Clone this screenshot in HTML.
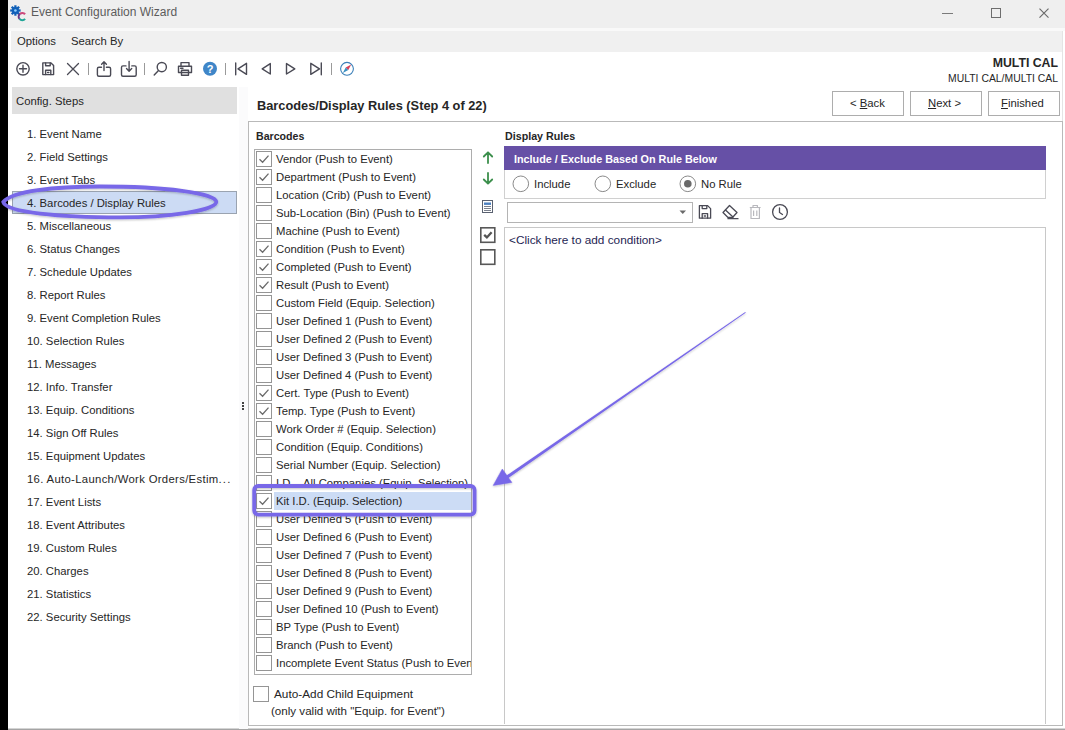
<!DOCTYPE html>
<html><head><meta charset="utf-8">
<style>
*{margin:0;padding:0;box-sizing:border-box}
html,body{width:1065px;height:730px;overflow:hidden;background:#fff;font-family:"Liberation Sans",sans-serif;color:#1f1f1f}
.a{position:absolute}
.t{position:absolute;white-space:nowrap;font-size:11.3px;line-height:14px;color:#262626}
#left{left:0;top:0;width:8px;height:730px;background:#000}
#title{left:8px;top:0;width:1057px;height:28px;background:#efefef}
#tline{left:8px;top:28px;width:1057px;height:3px;background:#f9f9f9}
#menu{left:11px;top:31px;width:1051px;height:21px;background:#f0f0f0}
.steps .t{left:27px}
.cb{position:absolute;width:16px;height:16px;border:1px solid #959595;background:#fff}
.row{position:absolute;left:0;height:18px;width:216px}
.row .cb{left:1px;top:1px}
.row .t{left:21px;top:2px}
.ck{position:absolute;left:0;top:0}
.sel .t{left:19px;padding-left:2px;width:200px;background:#ccdcf5;height:18px;top:0;padding-top:2px}
</style></head><body>
<div id="left" class="a"></div>
<div id="title" class="a"></div>
<div id="tline" class="a"></div>
<div id="menu" class="a"></div>


<!-- app icon -->
<svg class="a" style="left:8px;top:2px" width="24" height="24" viewBox="0 0 24 24">
  <g transform="translate(7.4,8.5) scale(0.87)" fill="#1160b8">
    <circle r="4"/>
    <g id="teeth"><rect x="-1.3" y="-6" width="2.6" height="3"/><rect x="-1.3" y="3" width="2.6" height="3"/><rect x="-6" y="-1.3" width="3" height="2.6"/><rect x="3" y="-1.3" width="3" height="2.6"/></g>
    <g transform="rotate(45)"><rect x="-1.3" y="-6" width="2.6" height="3"/><rect x="-1.3" y="3" width="2.6" height="3"/><rect x="-6" y="-1.3" width="3" height="2.6"/><rect x="3" y="-1.3" width="3" height="2.6"/></g>
    <circle r="1.5" fill="#8fd0ff"/>
  </g>
  <path d="M17.06 12.29 A3.6 3.6 0 0 0 11.99 11.84" fill="none" stroke="#cc4a7c" stroke-width="2.1"/>
  <path d="M11.99 11.84 A3.6 3.6 0 0 0 11.54 16.91" fill="none" stroke="#6a3c86" stroke-width="2.1"/>
  <path d="M11.54 16.91 A3.6 3.6 0 0 0 17.06 16.91" fill="none" stroke="#1fa596" stroke-width="2.1"/>
</svg>
<!-- window controls -->
<div class="a" style="left:942px;top:13px;width:11px;height:1px;background:#7a7a7a"></div>
<div class="a" style="left:991px;top:8px;width:10px;height:10px;border:1px solid #6e6e6e"></div>
<svg class="a" style="left:1038px;top:7px" width="12" height="12" viewBox="0 0 12 12"><path d="M1.5 1.6L10.5 10.6M10.5 1.6L1.5 10.6" stroke="#6a6a6a" stroke-width="1.15"/></svg>

<!-- toolbar -->
<svg class="a" style="left:0;top:52px" width="370" height="34" viewBox="0 52 370 34">
 <g fill="none" stroke="#4a4a55" stroke-width="1.4" stroke-linejoin="round" stroke-linecap="round">
  <circle cx="23" cy="68.8" r="6.2"/>
  <path d="M23 65.3V72.3M19.5 68.8H26.5"/>
  <path d="M42.8 62.9H51L53.6 65.5V74.6H42.8Z"/>
  <path d="M45.6 62.9V65.7H50.2V62.9"/>
  <path d="M45.6 74.6V70.2H50.8V74.6"/>
  <path d="M47.6 72.5H48.8" stroke-width="1.5"/>
  <path d="M67.5 63.5L78.5 74.5M78.5 63.5L67.5 74.5" stroke-width="1.3"/>
  <path d="M101.5 67.3H98.9Q97.4 67.3 97.4 68.8V74.7Q97.4 76.2 98.9 76.2H109.1Q110.6 76.2 110.6 74.7V68.8Q110.6 67.3 109.1 67.3H106.4"/>
  <path d="M104 70.6V61.8M101.6 64.2L104 61.8L106.4 64.2"/>
  <path d="M126 65.9H123Q121.5 65.9 121.5 67.4V74.7Q121.5 76.2 123 76.2H134.7Q136.2 76.2 136.2 74.7V67.4Q136.2 65.9 134.7 65.9H131.8"/>
  <path d="M129.1 61.5V71.1M126.5 68.6L129.1 71.2L131.7 68.6"/>
  <circle cx="161.8" cy="67.1" r="4.6"/>
  <path d="M158.5 70.4L154.2 75"/>
  <path d="M181 65.5V62.6H189V65.5"/>
  <path d="M178.5 72.5V66.2H191.5V72.5Z" />
  <path d="M181.5 70.2V75.2H188.5V70.2Z"/>
  <path d="M180.6 68.3H183"/>
  <path d="M235.7 63V74.7"/>
  <path d="M246.5 63.3V74.4L238 68.8Z"/>
  <path d="M270.3 63.6V74L262.2 68.8Z"/>
  <path d="M286.5 63.6V74L294.8 68.8Z"/>
  <path d="M310.8 63.3V74.4L319.5 68.8Z"/>
  <path d="M321.3 63V74.7"/>
 </g>
 <g stroke="#9a9a9a" stroke-width="1"><path d="M88.5 63V75M144.5 63V75M225.5 63V75M331.5 63V75"/></g>
 <circle cx="210" cy="68.7" r="7" fill="#3f86c8"/>
 <text x="210" y="72.8" font-family="Liberation Sans" font-weight="bold" font-size="11" fill="#fff" text-anchor="middle">?</text>
 <circle cx="347" cy="68.8" r="6.4" fill="none" stroke="#3a7fb8" stroke-width="1.1"/>
 <path d="M351.2 64.6L348.3 70.1L345.7 67.5Z" fill="#d8405a"/>
 <path d="M342.8 73L345.7 67.5L348.3 70.1Z" fill="#3a8fc0"/>
</svg>

<!-- title -->
<div class="t" style="left:31px;top:5px;font-size:12px;color:#5c5c5c">Event Configuration Wizard</div>
<!-- menu -->
<div class="t" style="left:17px;top:34px">Options</div>
<div class="t" style="left:71px;top:34px">Search By</div>

<!-- right border of window -->
<div class="a" style="left:1062px;top:31px;width:1px;height:90px;background:#e4e4e4"></div>
<!-- bottom border -->
<div class="a" style="left:8px;top:728px;width:1057px;height:1px;background:#d4d4d4"></div><div class="a" style="left:8px;top:729px;width:1057px;height:1px;background:#a4a4a4"></div>

<!-- left panel header -->
<div class="a" style="left:12px;top:87px;width:225px;height:27px;background:#e0e0e0"></div>
<div class="t" style="left:16px;top:94px">Config. Steps</div>

<!-- splitter strip -->
<div class="a" style="left:239px;top:87px;width:9px;height:642px;background:#fbfbfc"></div>

<!-- selection -->
<div class="a" style="left:12px;top:191px;width:225px;height:23px;background:#ccdbf4;border:1px solid #9aa3b0"></div>

<div class="steps">
<div class="t" style="top:127px">1. Event Name</div>
<div class="t" style="top:150px">2. Field Settings</div>
<div class="t" style="top:173px">3. Event Tabs</div>
<div class="t" style="top:196px">4. Barcodes / Display Rules</div>
<div class="t" style="top:219px">5. Miscellaneous</div>
<div class="t" style="top:242px">6. Status Changes</div>
<div class="t" style="top:265px">7. Schedule Updates</div>
<div class="t" style="top:288px">8. Report Rules</div>
<div class="t" style="top:311px">9. Event Completion Rules</div>
<div class="t" style="top:334px">10. Selection Rules</div>
<div class="t" style="top:357px">11. Messages</div>
<div class="t" style="top:380px">12. Info. Transfer</div>
<div class="t" style="top:403px">13. Equip. Conditions</div>
<div class="t" style="top:426px">14. Sign Off Rules</div>
<div class="t" style="top:449px">15. Equipment Updates</div>
<div class="t" style="top:472px;letter-spacing:0.33px">16. Auto-Launch/Work Orders/Estim<span style="letter-spacing:1.2px">...</span></div>
<div class="t" style="top:495px">17. Event Lists</div>
<div class="t" style="top:518px">18. Event Attributes</div>
<div class="t" style="top:541px">19. Custom Rules</div>
<div class="t" style="top:564px">20. Charges</div>
<div class="t" style="top:587px">21. Statistics</div>
<div class="t" style="top:610px">22. Security Settings</div>
</div>

<!-- main header -->
<div class="t" style="left:257px;top:98px;font-size:12.8px;font-weight:bold;line-height:16px">Barcodes/Display Rules (Step 4 of 22)</div>
<div class="t" style="right:7px;top:56px;font-size:12.3px;font-weight:bold;line-height:15px">MULTI CAL</div>
<div class="t" style="right:7px;top:72px;font-size:10.4px;line-height:13px">MULTI CAL/MULTI CAL</div>

<!-- buttons -->
<div class="a" style="left:832px;top:91px;width:72px;height:25px;border:1px solid #adadad;background:#fff"></div>
<div class="a" style="left:910px;top:91px;width:72px;height:25px;border:1px solid #adadad;background:#fff"></div>
<div class="a" style="left:988px;top:91px;width:72px;height:25px;border:1px solid #adadad;background:#fff"></div>
<div class="t" style="left:850px;top:96px">&lt; <u>B</u>ack</div>
<div class="t" style="left:928px;top:96px"><u>N</u>ext &gt;</div>
<div class="t" style="left:1001px;top:96px"><u>F</u>inished</div>

<!-- group box -->
<div class="a" style="left:248px;top:121px;width:815px;height:605px;border:1px solid #b9b9b9"></div>
<div class="t" style="left:256px;top:129px;font-weight:bold;font-size:10.6px">Barcodes</div>
<div class="t" style="left:505px;top:129px;font-weight:bold;font-size:10.7px">Display Rules</div>

<!-- list box -->
<div class="a" style="left:254px;top:149px;width:218px;height:526px;border:1px solid #adadad;overflow:hidden">
<div class="row" style="top:0px"><div class="cb"><svg class="ck" width="14" height="14" viewBox="0 0 14 14"><path d="M2.5 7.2 L5.6 10.3 L11.5 3.6" fill="none" stroke="#6b6b6b" stroke-width="1.3"/></svg></div><div class="t">Vendor (Push to Event)</div></div>
<div class="row" style="top:18px"><div class="cb"><svg class="ck" width="14" height="14" viewBox="0 0 14 14"><path d="M2.5 7.2 L5.6 10.3 L11.5 3.6" fill="none" stroke="#6b6b6b" stroke-width="1.3"/></svg></div><div class="t">Department (Push to Event)</div></div>
<div class="row" style="top:36px"><div class="cb"></div><div class="t">Location (Crib) (Push to Event)</div></div>
<div class="row" style="top:54px"><div class="cb"></div><div class="t">Sub-Location (Bin) (Push to Event)</div></div>
<div class="row" style="top:72px"><div class="cb"></div><div class="t">Machine (Push to Event)</div></div>
<div class="row" style="top:90px"><div class="cb"><svg class="ck" width="14" height="14" viewBox="0 0 14 14"><path d="M2.5 7.2 L5.6 10.3 L11.5 3.6" fill="none" stroke="#6b6b6b" stroke-width="1.3"/></svg></div><div class="t">Condition (Push to Event)</div></div>
<div class="row" style="top:108px"><div class="cb"><svg class="ck" width="14" height="14" viewBox="0 0 14 14"><path d="M2.5 7.2 L5.6 10.3 L11.5 3.6" fill="none" stroke="#6b6b6b" stroke-width="1.3"/></svg></div><div class="t">Completed (Push to Event)</div></div>
<div class="row" style="top:126px"><div class="cb"><svg class="ck" width="14" height="14" viewBox="0 0 14 14"><path d="M2.5 7.2 L5.6 10.3 L11.5 3.6" fill="none" stroke="#6b6b6b" stroke-width="1.3"/></svg></div><div class="t">Result (Push to Event)</div></div>
<div class="row" style="top:144px"><div class="cb"></div><div class="t">Custom Field (Equip. Selection)</div></div>
<div class="row" style="top:162px"><div class="cb"></div><div class="t">User Defined 1 (Push to Event)</div></div>
<div class="row" style="top:180px"><div class="cb"></div><div class="t">User Defined 2 (Push to Event)</div></div>
<div class="row" style="top:198px"><div class="cb"></div><div class="t">User Defined 3 (Push to Event)</div></div>
<div class="row" style="top:216px"><div class="cb"></div><div class="t">User Defined 4 (Push to Event)</div></div>
<div class="row" style="top:234px"><div class="cb"><svg class="ck" width="14" height="14" viewBox="0 0 14 14"><path d="M2.5 7.2 L5.6 10.3 L11.5 3.6" fill="none" stroke="#6b6b6b" stroke-width="1.3"/></svg></div><div class="t">Cert. Type (Push to Event)</div></div>
<div class="row" style="top:252px"><div class="cb"><svg class="ck" width="14" height="14" viewBox="0 0 14 14"><path d="M2.5 7.2 L5.6 10.3 L11.5 3.6" fill="none" stroke="#6b6b6b" stroke-width="1.3"/></svg></div><div class="t">Temp. Type (Push to Event)</div></div>
<div class="row" style="top:270px"><div class="cb"></div><div class="t">Work Order # (Equip. Selection)</div></div>
<div class="row" style="top:288px"><div class="cb"></div><div class="t">Condition (Equip. Conditions)</div></div>
<div class="row" style="top:306px"><div class="cb"></div><div class="t">Serial Number (Equip. Selection)</div></div>
<div class="row" style="top:324px"><div class="cb"></div><div class="t">I.D. - All Companies (Equip. Selection)</div></div>
<div class="row sel" style="top:342px"><div class="cb"><svg class="ck" width="14" height="14" viewBox="0 0 14 14"><path d="M2.5 7.2 L5.6 10.3 L11.5 3.6" fill="none" stroke="#6b6b6b" stroke-width="1.3"/></svg></div><div class="t">Kit I.D. (Equip. Selection)</div></div>
<div class="row" style="top:360px"><div class="cb"></div><div class="t">User Defined 5 (Push to Event)</div></div>
<div class="row" style="top:378px"><div class="cb"></div><div class="t">User Defined 6 (Push to Event)</div></div>
<div class="row" style="top:396px"><div class="cb"></div><div class="t">User Defined 7 (Push to Event)</div></div>
<div class="row" style="top:414px"><div class="cb"></div><div class="t">User Defined 8 (Push to Event)</div></div>
<div class="row" style="top:432px"><div class="cb"></div><div class="t">User Defined 9 (Push to Event)</div></div>
<div class="row" style="top:450px"><div class="cb"></div><div class="t">User Defined 10 (Push to Event)</div></div>
<div class="row" style="top:468px"><div class="cb"></div><div class="t">BP Type (Push to Event)</div></div>
<div class="row" style="top:486px"><div class="cb"></div><div class="t">Branch (Push to Event)</div></div>
<div class="row" style="top:504px"><div class="cb"></div><div class="t">Incomplete Event Status (Push to Event)</div></div>
</div>

<!-- display rules -->
<div class="a" style="left:504px;top:146px;width:542px;height:24px;background:#6650a6"></div>
<div class="t" style="left:514px;top:152px;color:#fff;font-weight:bold;font-size:10.8px">Include / Exclude Based On Rule Below</div>
<div class="a" style="left:504px;top:170px;width:542px;height:29px;border:1px solid #d0d0d0;border-top:none"></div>
<div class="a" style="left:507px;top:202px;width:186px;height:21px;border:1px solid #b4b4b4"></div>
<div class="a" style="left:504px;top:227px;width:542px;height:497px;border:1px solid #c8c8c8;border-bottom:none"></div>
<div class="t" style="left:509px;top:233px;color:#1e1e52;font-size:11.8px">&lt;Click here to add condition&gt;</div>

<!-- auto add -->
<div class="cb" style="left:253px;top:686px;width:16px;height:16px"></div>
<div class="t" style="left:274px;top:687px;font-size:11.8px">Auto-Add Child Equipment</div>
<div class="t" style="left:271px;top:704px;font-size:11.6px">(only valid with "Equip. for Event")</div>


<!-- radios -->
<svg class="a" style="left:504px;top:171px" width="220" height="28" viewBox="504 171 220 28">
 <g fill="#fff" stroke="#8a8a8a" stroke-width="1">
  <circle cx="520.8" cy="183.8" r="7.8"/>
  <circle cx="602.8" cy="183.8" r="7.8"/>
  <circle cx="687.8" cy="183.8" r="7.8"/>
 </g>
 <circle cx="687.8" cy="183.8" r="3.8" fill="#6a6a6a"/>
</svg>
<div class="t" style="left:534px;top:177px">Include</div>
<div class="t" style="left:616px;top:177px">Exclude</div>
<div class="t" style="left:701px;top:177px">No Rule</div>

<!-- combo arrow + icons -->
<svg class="a" style="left:675px;top:200px" width="115" height="25" viewBox="675 200 115 25">
 <path d="M679.5 210.5H686L682.75 214Z" fill="#6a6a6a"/>
 <g fill="none" stroke="#4a4a55" stroke-width="1.3" stroke-linejoin="round" stroke-linecap="round">
  <path d="M699.4 205.6H707.6L710.6 208.6V218.2H699.4Z"/>
  <path d="M702.2 205.6V208.6H706.8V205.6"/>
  <path d="M702.2 218.2V213.6H707.6V218.2"/>
  <path d="M704.3 216H705.5" stroke-width="1.5"/>
  <path d="M723 212.5L729.5 205.5L737 212.5L732.5 217.5H728Z"/>
  <path d="M725.5 210L733 217"/>
  <path d="M728 218.7H738"/>
 </g>
 <g fill="none" stroke="#b8b8bd" stroke-width="1.2" stroke-linejoin="round">
  <path d="M749.8 207.5H760.6M753 207.5V205.5H757.4V207.5"/>
  <path d="M751 208V218.5H759.4V208"/>
  <path d="M753.6 210.5V216M756.8 210.5V216"/>
 </g>
 <g fill="none" stroke="#4a4a55" stroke-width="1.3" stroke-linecap="round">
  <circle cx="780" cy="212" r="7.4"/>
  <path d="M779.5 208V212.5L782.5 214.5"/>
 </g>
</svg>

<!-- middle icons -->
<svg class="a" style="left:476px;top:148px" width="24" height="120" viewBox="476 148 24 120">
 <g fill="none" stroke="#3c8f4c" stroke-width="1.8" stroke-linecap="round" stroke-linejoin="round">
  <path d="M488 163V152.5M483.8 156.5L488 152.3L492.2 156.5"/>
  <path d="M488 173V183.5M483.8 179.5L488 183.7L492.2 179.5"/>
 </g>
 <rect x="482.5" y="200.5" width="10" height="12" fill="#fff" stroke="#5a6170" stroke-width="1"/>
 <rect x="484" y="202.5" width="7" height="2.4" fill="#4c80c0"/>
 <path d="M484 206.5H491M484 208.5H491M484 210.5H491" stroke="#6b7280" stroke-width="0.9"/>
 <rect x="480.8" y="227.8" width="14" height="14.5" fill="#fff" stroke="#585858" stroke-width="1.6"/>
 <path d="M484.2 234.8L486.9 237.4L491.6 232.2" fill="none" stroke="#555" stroke-width="2.3"/>
 <rect x="480.8" y="249.8" width="14" height="14.5" fill="#fff" stroke="#585858" stroke-width="1.6"/>
</svg>

<!-- grip -->
<div class="a" style="left:242px;top:402px;width:2px;height:2px;background:#444"></div>
<div class="a" style="left:242px;top:405px;width:2px;height:2px;background:#444"></div>
<div class="a" style="left:242px;top:408px;width:2px;height:2px;background:#444"></div>

<!-- annotations -->
<svg class="a" style="left:0;top:0" width="1065" height="730" viewBox="0 0 1065 730">
 <defs>
  <filter id="sh" x="-10%" y="-50%" width="120%" height="200%"><feGaussianBlur in="SourceAlpha" stdDeviation="1.2"/><feOffset dx="0.3" dy="0.8" result="b"/><feComponentTransfer><feFuncA type="linear" slope="0.25"/></feComponentTransfer><feMerge><feMergeNode/><feMergeNode in="SourceGraphic"/></feMerge></filter>
 </defs>
 <g filter="url(#sh)">
 <path d="M3.3 202 C12 191 55 186.5 100 186.5 C165 186.5 215 193 216.3 201.5 C217.5 210.5 168 217.3 120 217.3 C60 217.3 6 212.5 3.3 202 Z" fill="none" stroke="#7868e8" stroke-width="3.8"/>
 <rect x="254.2" y="486" width="220.4" height="28.6" rx="4" fill="none" stroke="#7868e8" stroke-width="3.8"/>
 <path d="M745.76 312.77 L504.41 480.82 L502.59 478.18 L745.24 312.03 Z" fill="#7868e8"/>
 <path d="M493.2 485.4 L502.3 469 L511.9 482.4 Z" fill="#7868e8" stroke="#7868e8" stroke-width="0.5" stroke-linejoin="round"/>
 </g>
</svg>

</body></html>
